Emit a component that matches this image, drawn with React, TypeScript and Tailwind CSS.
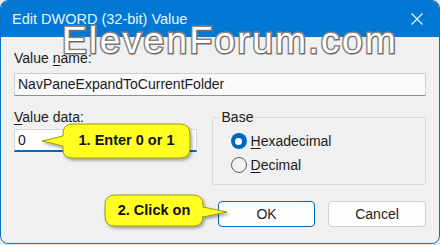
import React from "react";

const font = { fontFamily: '"Liberation Sans", Arial, sans-serif' };

function Radio({ checked, label, accel }: { checked?: boolean; label: string; accel: string }) {
  return (
    <div className="flex items-center gap-[4px] h-[16px]">
      {checked ? (
        <span className="w-[16px] h-[16px] rounded-full bg-[#0067c0] flex items-center justify-center">
          <span className="w-[7px] h-[7px] rounded-full bg-white" />
        </span>
      ) : (
        <span className="w-[16px] h-[16px] rounded-full border border-[#5d5d5d] bg-[#f3f3f3]" />
      )}
      <span className="text-[14px] leading-[16px] text-[#1b1b1b]">
        <span className="underline underline-offset-2">{accel}</span>
        {label}
      </span>
    </div>
  );
}

export default function App() {
  return (
    <div className="relative w-[440px] h-[245px] bg-[#e9e9e9] overflow-hidden" style={font}>
      <div className="h-[244px] rounded-[8px] border border-[#0a72cc] bg-[#f0f0f0] overflow-hidden flex flex-col">
        {/* title bar */}
        <div className="h-[36px] shrink-0 bg-[#0078d4] flex items-center justify-between pl-[11px] pr-[15px]">
          <span className="text-[14.5px] text-[#eaf4ff] leading-none">Edit DWORD (32-bit) Value</span>
          <svg width="12" height="12" viewBox="0 0 12 12" className="mr-[1px]">
            <path d="M0.5 0.5 L11.5 11.5 M11.5 0.5 L0.5 11.5" stroke="#eaf4ff" strokeWidth="1.2" />
          </svg>
        </div>

        <div className="flex-1 px-[13px] pt-[13px] flex flex-col">
          <div className="text-[14px] leading-[16px] text-[#1b1b1b]">
            Value <span className="underline underline-offset-2">n</span>ame:
          </div>
          <div className="mt-[7px] h-[23px] border border-[#cfcfcf] border-b-[#8d8d8d] bg-[#f9f9f9] flex items-center px-[3px] text-[14px] text-[#1b1b1b]">
            NavPaneExpandToCurrentFolder
          </div>

          <div className="mt-[13px] flex gap-[15px]">
            <div className="w-[183px]">
              <div className="text-[14px] leading-[16px] text-[#1b1b1b]">
                <span className="underline underline-offset-2">V</span>alue data:
              </div>
              <div className="mt-[4px] h-[23px] border border-[#d6d6d6] border-b-2 border-b-[#0067c0] bg-[#fdfdfd] flex items-center px-[3px] text-[14px] text-[#1b1b1b]">
                0
              </div>
            </div>
            <fieldset className="w-[215px] h-[76px] border border-[#dadada] rounded-[2px] pl-[18px]">
              <legend className="ml-[-11px] px-[2px] text-[14px] leading-[16px] text-[#1b1b1b]">Base</legend>
              <div className="mt-[8px] flex flex-col gap-[8px]">
                <Radio checked accel="H" label="exadecimal" />
                <Radio accel="D" label="ecimal" />
              </div>
            </fieldset>
          </div>

          <div className="mt-[16px] flex justify-end gap-[13px]">
            <div className="w-[97px] h-[26px] rounded-[4px] border border-[#0067c0] bg-[#fdfdfd] flex items-center justify-center text-[14px] text-[#1b1b1b]">
              OK
            </div>
            <div className="w-[98px] h-[26px] rounded-[4px] border border-[#d0d0d0] bg-[#fdfdfd] flex items-center justify-center text-[14px] text-[#1b1b1b]">
              Cancel
            </div>
          </div>
        </div>
      </div>

      {/* watermark */}
      <div
        className="absolute left-[62px] top-[19px] text-[37px] leading-[44px] tracking-[2.4px] text-white pointer-events-none"
        style={{ WebkitTextStroke: "3px #858585", paintOrder: "stroke fill", textShadow: "1px 1px 1px rgba(0,0,0,0.25)" }}
      >
        ElevenForum.com
      </div>

      {/* callouts */}
      <svg className="absolute left-0 top-0 pointer-events-none" width="440" height="245" viewBox="0 0 440 245">
        <defs>
          <filter id="sh" x="-20%" y="-30%" width="140%" height="160%">
            <feDropShadow dx="1.5" dy="2" stdDeviation="1.5" floodColor="#000" floodOpacity="0.35" />
          </filter>
        </defs>
        <path
          d="M73 124 H180 Q190 124 190 134 V148 Q190 158 180 158 H73 Q63 158 63 150 V146 L42 141 L63 136 V134 Q63 124 73 124 Z"
          fill="#ffff22"
          stroke="#9c9c10"
          strokeWidth="1"
          filter="url(#sh)"
        />
        <path
          d="M115 195 H193 Q203 195 203 205 V207 L227 212 L203 217 V216 Q203 226 193 226 H115 Q105 226 105 216 V205 Q105 195 115 195 Z"
          fill="#ffff22"
          stroke="#9c9c10"
          strokeWidth="1"
          filter="url(#sh)"
        />
      </svg>
      <div className="absolute left-[63px] top-[124px] w-[127px] h-[34px] flex items-center justify-center text-[14.5px] font-bold text-[#111] pointer-events-none">
        1. Enter 0 or 1
      </div>
      <div className="absolute left-[105px] top-[195px] w-[98px] h-[31px] flex items-center justify-center text-[14.5px] font-bold text-[#111] pointer-events-none">
        2. Click on
      </div>
    </div>
  );
}
